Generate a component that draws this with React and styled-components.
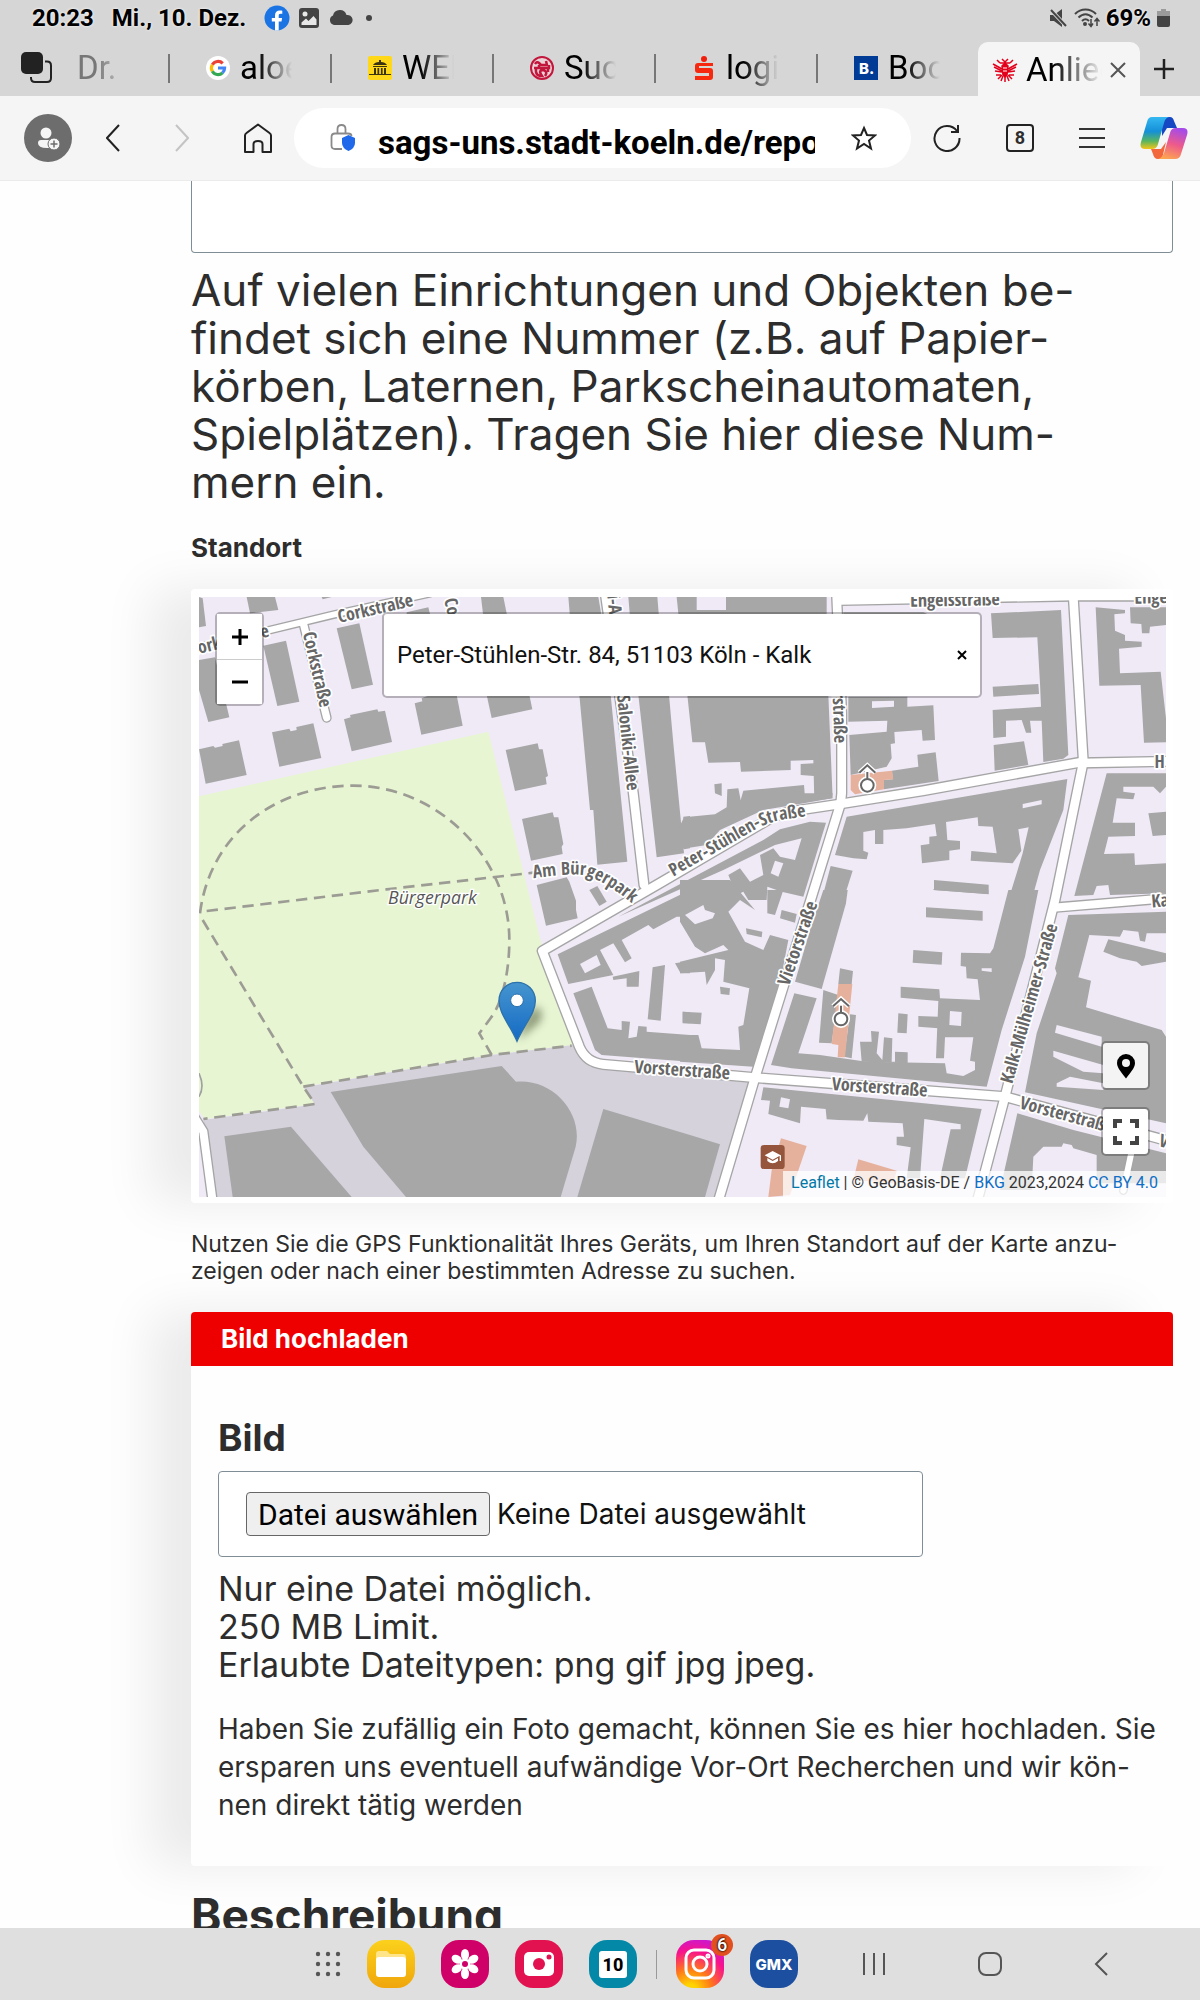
import React, { useRef, useState } from "react";
import styled, { createGlobalStyle } from "styled-components";

const TABS = [
  { key: "google", label: "aloe vera" },
  { key: "web", label: "WEB.DE" },
  { key: "ross", label: "Suche" },
  { key: "spk", label: "login" },
  { key: "booking", label: "Booking" }
];

export default function App() {
  return (
    <Shell>
      <GlobalStyle />
      <StatusBar />
      <TabStrip />
      <Toolbar />
      <Report />
      <Dock />
    </Shell>
  );
}

/* Browser chrome */

function StatusBar() {
  return (
    <Status>
      <StatusText>20:23</StatusText>
      <StatusText>Mi., 10. Dez.</StatusText>
      <StatusIcons>
        <svg width="26" height="26" viewBox="0 0 26 26">
          <circle cx="13" cy="13" r="12.5" fill="#1b74e4" />
          <path d="M11 25.5V16.500H7.800V13H11V10.500C11 7.200 12.900 5.500 15.800 5.500C17 5.500 18.300 5.700 18.300 5.700V8.800H16.700C15.100 8.800 14.700 9.700 14.700 10.700V13H18.100L17.500 16.500H14.700V25.500Z" fill="#fff" />
        </svg>
        <svg width="22" height="22" viewBox="0 0 22 22">
          <rect x="1" y="1" width="20" height="20" rx="3" fill="#444" />
          <circle cx="7" cy="7" r="2.500" fill="#e8e8e8" />
          <path d="M3.500 18V15.500L8 11.500L10.500 14L15.500 9L18.500 12.500V18Z" fill="#e8e8e8" />
        </svg>
        <svg width="26" height="16" viewBox="0 0 26 16">
          <path d="M6 15A5 5 0 0 1 5 5.500A7 7 0 0 1 18.500 5A5 5 0 0 1 20.500 15Z" fill="#444" />
        </svg>
        <svg width="20" height="8" viewBox="0 0 20 8">
          <circle cx="7" cy="4" r="3" fill="#444" />
        </svg>
      </StatusIcons>
      <StatusRight>
        <svg width="20" height="20" viewBox="0 0 20 20">
          <path d="M2 7H6L14 1V19L6 13H2Z" fill="#444" />
          <path d="M2 1L18 18" stroke="#d6d6d6" strokeWidth="4" />
          <path d="M3 2L18 18" stroke="#444" strokeWidth="2" />
        </svg>
        <svg width="26" height="20" viewBox="0 0 26 20" fill="none" stroke="#444" strokeWidth="2">
          <path d="M1 6C7 0 16 0 22 6M4.500 9.500C9 5 14 5 18.500 9.500M8 13C10.500 10.500 12.500 10.500 15 13" />
          <circle cx="11" cy="16" r="1" />
          <path d="M17 11V18M14.500 15.500L17 18.500L19 15.500M23 18V11M20.500 13.500L23 10.500L25.500 13.500" strokeWidth="1.500" />
        </svg>
        <StatusText>69%</StatusText>
        <svg width="13" height="18" viewBox="0 0 13 18">
          <path d="M4 0H9V2H13V8H0V2H4Z" fill="#9b9b9b" />
          <path d="M0 7H13V16Q13 18 11 18H2Q0 18 0 16Z" fill="#444" />
        </svg>
      </StatusRight>
    </Status>
  );
}

function TabStrip() {
  return (
    <Tabs>
      <FirstTab type="button">
        <svg width="32" height="32" viewBox="0 0 32 32">
          <path d="M24 9.500H26Q30 9.500 30 13.500V26Q30 30 26 30H14Q10 30 10 26V25" fill="none" stroke="#222" strokeWidth="2" />
          <rect x="0" y="0" width="22" height="22" rx="5" fill="#222" />
        </svg>
        <TabLabel dim>Dr.</TabLabel>
      </FirstTab>
      {TABS.map(tab => (
        <Tab key={tab.key} type="button">
          <Favicon kind={tab.key} />
          <TabLabel>{tab.label}</TabLabel>
        </Tab>
      ))}
      <ActiveTab>
        <Favicon kind="koeln" />
        <TabLabel>Anliegen</TabLabel>
        <IconButton type="button" aria-label="Tab schließen">
          <svg width="16" height="16" viewBox="0 0 16 16" stroke="#555" strokeWidth="2">
            <path d="M1 1L15 15M15 1L1 15" />
          </svg>
        </IconButton>
      </ActiveTab>
      <NewTab type="button" aria-label="Neuer Tab">
        <svg width="20" height="20" viewBox="0 0 20 20" stroke="#222" strokeWidth="2.500">
          <path d="M10 0V20M0 10H20" />
        </svg>
      </NewTab>
    </Tabs>
  );
}

function Favicon({ kind }) {
  if (kind === "google") {
    return (
      <svg width="24" height="24" viewBox="0 0 24 24" fill="none" strokeWidth="3.200">
        <circle cx="12" cy="12" r="12" fill="#fff" />
        <path d="M6.300 8.700A6.600 6.600 0 0 1 16.700 7.400" stroke="#ea4335" />
        <path d="M6.300 15.300A6.600 6.600 0 0 1 6.300 8.700" stroke="#fbbc05" />
        <path d="M16.500 16.800A6.600 6.600 0 0 1 6.300 15.300" stroke="#34a853" />
        <path d="M12 12H18.600A6.600 6.600 0 0 1 16.500 16.800" stroke="#4285f4" />
      </svg>
    );
  }
  if (kind === "web") {
    return (
      <svg width="24" height="24" viewBox="0 0 24 24">
        <rect width="24" height="24" rx="2" fill="#ffd81a" />
        <path d="M11 4H13V6Q17 6 19 9H5Q7 6 11 6ZM5 10H19V11H5ZM6 12H8V18H6ZM9.500 12H11.200V18H9.500ZM12.900 12H14.600V18H12.900ZM16 12H18V18H16ZM1 18H23V19H1Z" fill="#3b3410" />
      </svg>
    );
  }
  if (kind === "ross") {
    return (
      <svg width="24" height="24" viewBox="0 0 24 24" fill="none" stroke="#c3163c" strokeWidth="2">
        <circle cx="12" cy="12" r="11" fill="#ead3d6" />
        <path d="M5 8Q7 5 9 7L11 9H17L16 5M4 12H19V9M6 13C5 20 10 20 12 20C10 17 9 15 12 14C15 14 18 16 15 20M9 9V12M18 12V16" strokeWidth="2.500" />
      </svg>
    );
  }
  if (kind === "spk") {
    return (
      <svg width="24" height="24" viewBox="0 0 24 24">
        <circle cx="12" cy="3" r="3" fill="#f21d0a" />
        <path d="M6 7H21V10H7V12H18Q21 12 21 15V21Q21 24 18 24H3V20H17V17H6Q3 17 3 14V10Q3 7 6 7Z" fill="#f6280f" />
      </svg>
    );
  }
  if (kind === "booking") {
    return (
      <svg width="24" height="24" viewBox="0 0 24 24">
        <rect width="24" height="24" fill="#003b95" />
        <text x="5" y="18" fontFamily="Inter, sans-serif" fontWeight="800" fontSize="15" fill="#fff">B.</text>
      </svg>
    );
  }
  return (
    <svg width="26" height="26" viewBox="0 0 26 26" fill="none" stroke="#e2001a" strokeWidth="1.500">
      <path d="M10 2L13 5L16 2M8 6H18M5 3L8 6M21 3L18 6M1 7L10 12M25 7L16 12M2 10L10 14M24 10L16 14M3 14L10 15M23 14L16 15M4 18H9M22 18H17M6 22L10 18M20 22L16 18M9 24L11 19M17 24L15 19M13 20V25" />
      <path d="M13 6L16 9L15 18L13 20L11 18L10 9Z" fill="#e2001a" />
      <path d="M11 11H15M11 14H15" stroke="#fff" strokeWidth="1" />
    </svg>
  );
}

function Toolbar() {
  return (
    <Bar>
      <IconButton type="button" aria-label="Profil">
        <svg width="48" height="48" viewBox="0 0 48 48">
          <circle cx="24" cy="24" r="24" fill="#6d6d6d" />
          <circle cx="22" cy="19" r="5.500" fill="#f5f5f5" />
          <path d="M14 29Q14 26 17 26H28V34H23Q14 34 14 29Z" fill="#f5f5f5" />
          <circle cx="30" cy="30" r="6" fill="#f5f5f5" stroke="#6d6d6d" />
          <path d="M30 26.500V33.500M26.500 30H33.500" stroke="#6d6d6d" strokeWidth="1.500" />
        </svg>
      </IconButton>
      <NavGroup>
        <IconButton type="button" aria-label="Zurück">
          <svg width="14" height="28" viewBox="0 0 14 28" fill="none" stroke="#222" strokeWidth="2">
            <path d="M13 1L1 14L13 27" />
          </svg>
        </IconButton>
        <IconButton type="button" aria-label="Vorwärts">
          <svg width="14" height="28" viewBox="0 0 14 28" fill="none" stroke="#c4c4c4" strokeWidth="2">
            <path d="M1 1L13 14L1 27" />
          </svg>
        </IconButton>
        <IconButton type="button" aria-label="Startseite">
          <svg width="28" height="30" viewBox="0 0 28 30" fill="none" stroke="#222" strokeWidth="2" strokeLinejoin="round">
            <path d="M1 12.500Q1 11 2.500 10L14 1.500L25.500 10Q27 11 27 12.500V29H18.500V21Q18.500 18 14 18Q9.500 18 9.500 21V29H1Z" />
          </svg>
        </IconButton>
      </NavGroup>
      <AddressPill>
        <svg width="26" height="28" viewBox="0 0 26 28" fill="none">
          <path d="M12 25H5Q1.500 25 1.500 21.500V13Q1.500 9.500 5 9.500H18Q21.500 9.500 21.500 12M7.500 9V5Q7.500 1 11.500 1Q15.500 1 15.500 5V9" stroke="#8a8a8a" strokeWidth="1.800" />
          <path d="M18.500 11L25 14V19Q25 24 18.500 27Q12 24 12 19V14Z" fill="#2169eb" />
        </svg>
        <Address aria-label="Adresse" defaultValue="sags-uns.stadt-koeln.de/report" />
        <IconButton type="button" aria-label="Favorit">
          <svg width="26" height="26" viewBox="0 0 26 26" fill="none" stroke="#222" strokeWidth="2" strokeLinejoin="miter">
            <path d="M13 3L16 10L24 10.500L18 15.600L20 23.500L13 19L6 23.500L8 15.600L2 10.500L10 10Z" />
          </svg>
        </IconButton>
      </AddressPill>
      <ToolGroup>
        <IconButton type="button" aria-label="Neu laden">
          <svg width="28" height="28" viewBox="0 0 28 28" fill="none" stroke="#222" strokeWidth="2">
            <path d="M24 7A12.500 12.500 0 1 0 26.500 14M25 1V8H18" />
          </svg>
        </IconButton>
        <TabCount type="button" aria-label="Offene Tabs">8</TabCount>
        <IconButton type="button" aria-label="Menü">
          <svg width="26" height="20" viewBox="0 0 26 20" stroke="#333" strokeWidth="2">
            <path d="M0 1H26M0 10H26M0 19H26" />
          </svg>
        </IconButton>
        <IconButton type="button" aria-label="Copilot">
          <svg width="48" height="44" viewBox="0 0 48 44">
            <defs>
              <linearGradient id="cpA" x1="0" y1="0" x2="0" y2="1">
                <stop offset="0" stopColor="#35b8f1" />
                <stop offset=".45" stopColor="#1590d8" />
                <stop offset=".75" stopColor="#57b560" />
                <stop offset="1" stopColor="#f5c518" />
              </linearGradient>
              <linearGradient id="cpB" x1=".6" y1="0" x2=".3" y2="1">
                <stop offset="0" stopColor="#a64be8" />
                <stop offset=".5" stopColor="#ed5a8b" />
                <stop offset="1" stopColor="#fda650" />
              </linearGradient>
            </defs>
            <path d="M22 1H30Q33 1 34 5L37 12H27L22 20Z" fill="#1748c4" />
            <path d="M11 33H21L26 26L22 43H18Q14 43 13 38Z" fill="#f2683c" />
            <path d="M12 1H29Q25 2 24 7L18 28Q17 33 12 33H5Q-1 33 1 26L7 6Q8 1 12 1Z" fill="url(#cpA)" />
            <path d="M36 12H43Q49 12 47 19L41 38Q40 43 35 43H18Q22 42 24 37L30 17Q31 12 36 12Z" fill="url(#cpB)" />
          </svg>
        </IconButton>
      </ToolGroup>
    </Bar>
  );
}

/* Report page */

function Report() {
  const fileRef = useRef(null);
  const [fileName, setFileName] = useState("");

  return (
    <Page>
      <NumberField aria-label="Nummer" />
      <Help>
        Auf vielen Einrichtungen und Objekten be-<br />
        findet sich eine Nummer (z.B. auf Papier-<br />
        körben, Laternen, Parkscheinautomaten,<br />
        Spielplätzen). Tragen Sie hier diese Num-<br />
        mern ein.
      </Help>
      <FieldTitle>Standort</FieldTitle>
      <LocationMap />
      <MapHint>
        Nutzen Sie die GPS Funktionalität Ihres Geräts, um Ihren Standort auf der Karte anzu-<br />
        zeigen oder nach einer bestimmten Adresse zu suchen.
      </MapHint>
      <Panel>
        <PanelHead>Bild hochladen</PanelHead>
        <PanelBody>
          <FileLabel htmlFor="bild">Bild</FileLabel>
          <FileBox>
            <FileButton type="button" onClick={() => fileRef.current.click()}>Datei auswählen</FileButton>
            <span>{fileName || "Keine Datei ausgewählt"}</span>
            <input
              id="bild"
              ref={fileRef}
              type="file"
              hidden
              accept=".png,.gif,.jpg,.jpeg"
              onChange={e => setFileName(e.target.files[0]?.name || "")}
            />
          </FileBox>
          <Limits>
            Nur eine Datei möglich.<br />
            250 MB Limit.<br />
            Erlaubte Dateitypen: png gif jpg jpeg.
          </Limits>
          <PanelText>
            Haben Sie zufällig ein Foto gemacht, können Sie es hier hochladen. Sie<br />
            ersparen uns eventuell aufwändige Vor-Ort Recherchen und wir kön-<br />
            nen direkt tätig werden
          </PanelText>
        </PanelBody>
      </Panel>
      <NextTitle>Beschreibung</NextTitle>
    </Page>
  );
}

function LocationMap() {
  return (
    <MapCard>
      <MapView>
        <MapDrawing />
        <ZoomControl>
          <ZoomButton type="button" aria-label="Vergrößern">
            <svg width="16" height="16" viewBox="0 0 16 16" stroke="#000" strokeWidth="3"><path d="M8 0V16M0 8H16" /></svg>
          </ZoomButton>
          <ZoomButton type="button" aria-label="Verkleinern">
            <svg width="16" height="16" viewBox="0 0 16 16" stroke="#000" strokeWidth="3"><path d="M0 8H16" /></svg>
          </ZoomButton>
        </ZoomControl>
        <SearchBox>
          <SearchInput aria-label="Adresse suchen" defaultValue="Peter-Stühlen-Str. 84, 51103 Köln - Kalk" />
          <IconButton type="button" aria-label="Suche leeren">
            <svg width="10" height="10" viewBox="0 0 10 10" stroke="#000" strokeWidth="2"><path d="M1 1L9 9M9 1L1 9" /></svg>
          </IconButton>
        </SearchBox>
        <SideControls>
          <MapButton type="button" aria-label="Mein Standort" muted>
            <svg width="20" height="26" viewBox="0 0 20 26">
              <path d="M10 1A9 9 0 0 1 19 10C19 15 14 20 10 25.500C6 20 1 15 1 10A9 9 0 0 1 10 1ZM10 6A4 4 0 1 0 10 14A4 4 0 1 0 10 6Z" fill="#000" />
            </svg>
          </MapButton>
          <MapButton type="button" aria-label="Vollbild">
            <svg width="26" height="26" viewBox="0 0 26 26" fill="none" stroke="#444" strokeWidth="4">
              <path d="M2 9V2H9M17 2H24V9M24 17V24H17M9 24H2V17" />
            </svg>
          </MapButton>
        </SideControls>
        <Attribution>
          <a href="#leaflet">Leaflet</a> | © GeoBasis-DE / <a href="#bkg">BKG</a> 2023,2024 <a href="#cc">CC BY 4.0</a>
        </Attribution>
      </MapView>
    </MapCard>
  );
}

// building footprints, one list per map tile; origin of the tile in brackets
const TILE_NW = [
  "27,51 38,55 48,138 27,142", "170,51 255,51 265,90 180,100", "395,51 425,51 398,58",
  "27,240 75,232 118,412 55,426 27,330", "220,197 288,182 328,365 262,378", "440,145 508,130 549,314 485,328",
  "27,508 70,498 75,503 98,498 97,492 147,481 170,585 47,611",
  "246,457 298,446 302,454 320,450 319,441 370,430 394,534 268,560",
  "462,418 482,412 480,405 562,388 565,395 585,392 606,486 485,514",
  "674,370 697,364 695,355 720,345 800,345 818,437 694,464", "890,345 1018,345 1027,388 905,414",
  "650,97 715,82 722,110 650,110", "873,51 940,51 952,110 880,110", "1135,51 1225,51 1235,110 1140,110",
  "947,510 1043,490 1047,508 1058,508 1074,588 1067,592 1070,613 975,633",
  "996,717 1088,697 1092,712 1105,712 1120,792 1115,800 1118,822 1023,842",
  "1040,915 1130,892 1138,905 1158,962 1158,990 1163,1015 1068,1037", "1198,930 1222,918 1250,965 1228,978",
  "1168,345 1262,345 1312,845 1222,854 1210,690 1200,690", "1345,345 1437,345 1450,490 1482,820 1400,832",
  "1315,51 1402,51 1407,110 1320,110", "1480,710 1500,708 1500,805 1482,808", "1460,51 1520,51 1520,110 1466,110"
];
// [1470, 0]
const TILE_NE = [
  "48,51 48,90 138,90 138,51 440,51 440,110 0,110 0,51",
  "22,345 445,345 458,655 403,662 400,540 332,542 332,570 183,575 180,546 85,548 75,487 37,487",
  "362,552 402,550 402,588 362,585", "103,613 125,610 125,648 105,640",
  "12,712 105,703 140,682 142,628 175,625 182,660 190,632 372,615 374,640 458,640 455,655 380,668 250,690 120,750 80,795 0,808 -25,790",
  "505,350 682,350 682,380 760,376 765,480 728,482 725,450 643,456 645,490 632,492 635,535 620,560 512,585 508,465 620,455 622,422 505,425",
  "490,97 730,97 760,110 490,110",
  "712,524 767,517 776,603 612,628 612,600 638,598 636,572 715,560",
  "933,100 1143,90 1165,525 1150,536 1090,546 1085,422 1050,422 1054,458 1038,458 1025,420 978,422 978,470 940,474 938,390 1083,380 1080,310 1072,172 938,174",
  "938,320 1075,312 1077,342 940,350", "941,495 1032,484 1045,555 944,572",
  "1247,82 1335,90 1335,100 1303,103 1305,152 1335,165 1335,182 1385,185 1385,200 1317,206 1320,280 1442,275 1458,415 1458,487 1392,488 1382,315 1258,317",
  "1350,82 1458,82 1458,135 1410,140 1408,160 1386,160 1384,132 1352,130",
  "500,710 1162,597 1150,690 1080,870 1055,960 985,960 1010,880 1028,820 1046,742 1015,748 1024,812 998,850 872,842 874,813 950,820 938,740 895,738 893,712 798,726 802,780 840,783 840,808 808,812 808,840 726,850 722,796 748,792 748,770 770,768 765,732 680,745 610,750 610,792 585,792 585,750 550,756 550,812 565,818 560,838 520,835 465,825",
  "452,858 518,872 490,960 425,960", "762,900 926,914 926,943 762,930",
  "1280,580 1458,580 1458,620 1440,640 1420,620 1330,620 1330,635 1365,640 1360,658 1310,655 1298,728 1365,728 1365,768 1285,770 1272,822 1363,820 1365,855 1458,850 1458,940 1290,945 1285,915 1250,918 1240,945 1183,948",
  "1405,700 1458,695 1458,765 1418,768",
  "-185,1010 250,780 300,748 390,725 438,728 370,950 305,935 262,920 260,960 205,960 190,935 158,950 155,910 145,885 180,865 210,905 250,885 240,825 280,805 300,830 345,840 365,775 285,795 130,870"
];
// [0, 930]
const TILE_SW = [
  "103,739 303,710 485,921 128,921", "1240,657 1500,735 1590,763 1545,921 1162,921",
  "1103,193 1500,0 1500,80 1460,80 1390,118 1375,105 1295,150 1325,205 1305,217 1270,160 1230,180 1270,255 1135,282",
  "1150,310 1205,290 1253,415 1295,420 1295,393 1320,395 1315,445 1340,440 1345,408 1370,410 1370,425 1500,435 1500,515 1235,495 1215,480",
  "1268,260 1348,243 1346,290 1310,290 1310,265 1270,270", "1388,232 1425,225 1412,392 1373,388",
  "1478,365 1500,367 1500,400 1478,398", "1455,220 1500,212 1500,250 1472,250"
];
// [1470, 930]
const TILE_SE = [
  "0,-30 150,-30 225,60 180,30 145,65 195,155 250,180 270,135 325,150 300,280 220,530 0,515 0,435 55,435 65,475 180,480 175,410 190,405 208,295 130,275 135,210 105,205 105,240 80,285 75,245 0,250 0,215 145,180 130,165 75,190 45,170 0,95",
  "262,0 310,0 285,75 262,70", "8,365 65,368 62,403 8,400", "120,290 150,295 148,315 122,312",
  "198,115 247,125 245,142 200,132", "305,60 350,72 345,98 300,85",
  "430,0 503,0 498,40 425,297 345,275 390,120",
  "343,310 410,325 355,490 420,495 560,515 795,520 800,550 850,558 885,540 885,515 870,512 880,442 795,442 792,505 768,505 775,333 662,323 662,290 778,298 780,325 900,330 893,268 860,265 858,230 842,228 843,188 930,190 940,175 985,0 1075,0 1035,200 965,420 920,590 335,535 273,525",
  "738,52 908,63 908,92 738,82", "700,180 787,187 785,224 698,218", "760,-2 925,0 925,12 760,0",
  "655,370 683,373 680,430 652,428", "715,378 775,380 775,415 715,410",
  "540,455 575,455 573,423 597,425 590,490 607,510 612,442 637,445 635,515 645,515 645,485 683,487 683,520 545,515",
  "480,235 519,243 515,282 475,282", "430,300 475,315 455,460 417,458", "510,373 528,375 515,505 492,500",
  "250,592 905,657 855,865 780,865 812,718 842,718 842,703 733,687 720,865 680,865 692,772 650,765 650,740 672,740 668,700 565,695 562,670 550,692 475,690 440,688 437,657 363,650 360,700 265,672 270,632 243,630",
  "1165,75 1458,65 1458,130 1400,130 1395,155 1380,152 1375,125 1330,120 1320,140 1228,135 1195,262 1233,272 1218,352 1445,420 1458,440 1458,700 1035,607 1070,430 1130,250 1125,235",
  "1285,148 1458,190 1458,215 1385,228 1370,215 1320,205 1270,185",
  "1012,670 1180,720 1458,790 1458,880 1250,880 1250,795 1180,775 1175,765 1150,760 1145,770 1090,770 1060,800 1055,900 960,900"
];
const YARDS_SE = [
  "15,75 70,45 75,60 105,70 98,85 45,103", "810,363 845,366 843,408 808,405", "905,235 935,235 935,246 905,242",
  "303,622 330,628 325,655 298,650", "1130,405 1265,440 1265,470 1125,428", "1120,482 1270,525 1270,550 1210,545 1120,500",
  "1130,580 1170,560 1270,580 1270,600 1130,590"
];

const ROADS = [
  { d: "M0 208L240 150L430 104L720 40", w: 26 },
  { d: "M340 130L410 413", w: 30 },
  { d: "M1240 0L1330 640L1362 915", w: 34 },
  { d: "M1938 0L1955 400L1955 640L1952 670L1862 960L1780 1220L1695 1493L1580 1880", w: 34 },
  { d: "M1950 62L2650 49L2940 49", w: 32 },
  { d: "M2648 20L2680 545L2595 960L2445 1550L2360 1870", w: 34 },
  { d: "M2590 983L2940 954", w: 32 },
  { d: "M2830 1690L2800 1832", w: 26 },
  { d: "M0 1590L40 1655L70 1880", w: 32 },
  { d: "M2680 545L2200 632L1950 672L1830 690Q1760 700 1720 728L1400 915L1057 1113L1168 1400Q1188 1448 1240 1453L1695 1493L2445 1550L2640 1603L2960 1690", w: 34 },
  { d: "M2670 549L2940 544", w: 34 }
];

const LABELS = [
  { x: 560, y: 103, r: -13, t: "Corkstraße" },
  { x: 364, y: 272, r: 77, t: "Corkstraße" },
  { x: 50, y: 216, r: -14, t: "Cork" },
  { x: 228, y: 172, r: -14, t: "e" },
  { x: 768, y: 84, r: 77, t: "Co" },
  { x: 1255, y: 75, r: 84, t: "i-A" },
  { x: 1296, y: 490, r: 84, t: "Saloniki-Allee" },
  { x: 1930, y: 400, r: 88, t: "orstraße" },
  { x: 2295, y: 78, r: -1, t: "Engelsstraße" },
  { x: 2900, y: 70, r: -1, t: "Engels" },
  { x: 2909, y: 563, r: 0, t: "H" },
  { x: 2912, y: 980, r: -5, t: "Ka" },
  { x: 1840, y: 1095, r: -71, t: "Vietorstraße" },
  { x: 2535, y: 1275, r: -74, t: "Kalk-Mülheimer-Straße" },
  { x: 1475, y: 1488, r: 4, t: "Vorsterstraße" },
  { x: 2068, y: 1540, r: 4, t: "Vorsterstraße" },
  { x: 2625, y: 1622, r: 15, t: "Vorsterstraße" },
  { x: 2930, y: 1705, r: 15, t: "Vo" }
];

function Footprints({ list, fill = "#a7a7a7" }) {
  return list.map((points, i) => <polygon key={i} points={points} fill={fill} />);
}

function MapDrawing() {
  return (
    <MapSvg viewBox="27 51 2901 1800" preserveAspectRatio="xMidYMid slice" aria-hidden>
      <defs>
        <linearGradient id="pin" x1="0" y1="0" x2="0" y2="1">
          <stop offset="0" stopColor="#4695cf" />
          <stop offset="1" stopColor="#146ac4" />
        </linearGradient>
        <filter id="soft" x="-50%" y="-50%" width="200%" height="200%"><feGaussianBlur stdDeviation="12" /></filter>
        <path id="stuehlen" d="M1450 890L1690 752Q1740 722 1800 716L1900 700" />
        <path id="buerger" d="M1030 895Q1130 880 1180 885Q1240 900 1320 965" />
      </defs>
      <rect x="0" y="0" width="3000" height="1900" fill="#f0eaf7" />
      <path d="M0 655L895 455L1050 1075L1150 1395L905 1425L340 1520L375 1572L45 1617L0 1560Z" fill="#e7f5d3" />
      <path d="M40 1620L375 1573L340 1522L905 1425L1150 1395L1200 1460L1690 1500L1580 1880L75 1880Z" fill="#d5d2dc" />
      <Footprints list={TILE_NW} />
      <g transform="translate(1470 0)">
        <Footprints list={TILE_NE} />
        <Footprints fill="#f0eaf7" list={["576,364 642,362 642,380 576,384", "1028,672 1085,660 1085,673 1028,685", "285,842 310,850 295,890 272,880"]} />
        <polygon points="512,585 636,572 640,598 612,600 612,628 525,643 512,630" fill="#e6b19c" />
      </g>
      <g transform="translate(0 930)">
        <Footprints list={TILE_SW} />
        <path d="M422 606L935 528L978 575C1090 565 1180 670 1157 770L1112 921H648L520 770Z" fill="#a7a7a7" />
        <polygon points="1170,222 1220,195 1232,225 1185,250" fill="#f0eaf7" />
      </g>
      <g transform="translate(1470 930)">
        <Footprints list={TILE_SE} />
        <Footprints list={YARDS_SE} fill="#f0eaf7" />
        <Footprints fill="#e6b19c" list={["475,282 517,282 495,502 473,502 475,465 455,462", "303,745 380,768 330,915 265,921 275,840", "535,808 650,842 640,880 520,870"]} />
      </g>

      <g fill="none" stroke="#9c9c94" strokeWidth="8" strokeDasharray="34 20">
        <path d="M30 1000C60 760 260 617 490 617C740 617 958 830 958 1080C958 1180 935 1270 905 1310L868 1360L905 1425" />
        <path d="M50 993L590 928L1030 878" />
        <path d="M38 1020L340 1520L375 1572L40 1617" />
        <path d="M340 1520L905 1425L1145 1397" />
      </g>
      <path d="M27 1480Q45 1520 27 1550" fill="none" stroke="#a0a0a0" strokeWidth="5" />

      <g fill="none" strokeLinecap="round" strokeLinejoin="round">
        {ROADS.map(r => <path key={r.d} d={r.d} stroke="#a5a5a5" strokeWidth={r.w} />)}
        {ROADS.map(r => <path key={r.d} d={r.d} stroke="#fff" strokeWidth={r.w - 8} />)}
      </g>

      <StreetLabels>
        {LABELS.map(l => (
          <text key={l.t + l.x} transform={`translate(${l.x} ${l.y}) rotate(${l.r})`} textAnchor="middle">{l.t}</text>
        ))}
        <text><textPath href="#stuehlen">Peter-Stühlen-Straße</textPath></text>
        <text><textPath href="#buerger">Am Bürgerpark</textPath></text>
      </StreetLabels>
      <ParkLabel x="727" y="972" textAnchor="middle">Bürgerpark</ParkLabel>

      {/* places of worship */}
      {[[2032, 616], [1953, 1317]].map(([x, y]) => (
        <g key={x} transform={`translate(${x} ${y})`} fill="none">
          <path d="M-24 -38L0 -60L24 -38M0 -55V-20" stroke="#fff" strokeWidth="14" />
          <circle r="20" fill="#fff" stroke="#fff" strokeWidth="14" />
          <path d="M-24 -38L0 -60L24 -38M0 -40V-20" stroke="#666" strokeWidth="6" />
          <circle r="19" fill="#fff" stroke="#666" strokeWidth="6" />
        </g>
      ))}
      <g transform="translate(1712 1695)">
        <rect width="72" height="72" rx="10" fill="#94553c" />
        <path d="M12 31L36 18L60 31L36 44ZM20 39V48Q36 62 52 48V39L36 48ZM57 31H61V48H57Z" fill="#fff" />
      </g>

      <path d="M985 1380Q1000 1310 1035 1280Q1065 1285 1050 1325Z" fill="#44502f" opacity=".55" filter="url(#soft)" />
      <path d="M981 1207C1013 1207 1036 1232 1036 1262C1036 1300 1005 1330 981 1384C957 1330 927 1300 927 1262C927 1232 950 1207 981 1207Z" fill="url(#pin)" stroke="#2d72ab" strokeWidth="4" />
      <circle cx="981" cy="1261" r="19" fill="#fff" stroke="#2a6fa8" strokeWidth="3" />
    </MapSvg>
  );
}

/* Task bar of the tablet */

function Dock() {
  return (
    <DockBar>
      <DockApps>
        <DockButton type="button" aria-label="Alle Apps">
          <svg width="26" height="28" viewBox="0 0 26 28" fill="#555">
            {[3, 13, 23].map(x => [4, 14, 24].map(y => <circle key={`${x}-${y}`} cx={x} cy={y} r="2.200" />))}
          </svg>
        </DockButton>
        <DockApp type="button" aria-label="Eigene Dateien" bg="linear-gradient(#fbd11c, #f0a60b)">
          <svg width="32" height="28" viewBox="0 0 32 28">
            <path d="M1 4Q1 1 4 1H12L15 4H28Q31 4 31 8V14H1Z" fill="#ffe48a" />
            <rect x="1" y="7" width="30" height="20" rx="3" fill="#fff" />
          </svg>
        </DockApp>
        <DockApp type="button" aria-label="Galerie" bg="#cf0068">
          <svg width="32" height="32" viewBox="-16 -16 32 32">
            {[0, 60, 120, 180, 240, 300].map(a => (
              <ellipse key={a} cx="0" cy="-9.500" rx="4" ry="5.500" fill="#fff" transform={`rotate(${a})`} />
            ))}
            <circle r="5.500" fill="#fff" />
            <circle r="3" fill="#cf0068" />
          </svg>
        </DockApp>
        <DockApp type="button" aria-label="Kamera" bg="#e1124f">
          <svg width="30" height="24" viewBox="0 0 30 24">
            <rect width="30" height="24" rx="5" fill="#fff" />
            <circle cx="15" cy="12" r="6" fill="#e1124f" />
            <circle cx="25" cy="5" r="2.500" fill="#e1124f" />
          </svg>
        </DockApp>
        <DockApp type="button" aria-label="Kalender" bg="#0488a8">
          <CalendarPage>10</CalendarPage>
        </DockApp>
        <Divider />
        <DockApp type="button" aria-label="Instagram" bg="radial-gradient(circle at 30% 105%, #ffd400 10%, #ff7a18 35%, #f8128c 65%, #b01cf5 100%)">
          <svg width="32" height="32" viewBox="0 0 32 32" fill="none" stroke="#fff" strokeWidth="3">
            <rect x="2" y="2" width="28" height="28" rx="8" />
            <circle cx="16" cy="16" r="7" />
            <circle cx="24" cy="8" r="1" />
          </svg>
          <Badge>6</Badge>
        </DockApp>
        <DockApp type="button" aria-label="Mail" bg="#1c4f9f">GMX</DockApp>
      </DockApps>
      <SystemNav>
        <DockButton type="button" aria-label="Letzte Apps">
          <svg width="24" height="24" viewBox="0 0 24 24" stroke="#555" strokeWidth="2"><path d="M2 1V23M12 1V23M22 1V23" /></svg>
        </DockButton>
        <DockButton type="button" aria-label="Home">
          <svg width="24" height="24" viewBox="0 0 24 24" fill="none" stroke="#555" strokeWidth="2"><rect x="1" y="1" width="22" height="22" rx="7" /></svg>
        </DockButton>
        <DockButton type="button" aria-label="Zurück">
          <svg width="14" height="24" viewBox="0 0 14 24" fill="none" stroke="#555" strokeWidth="2"><path d="M13 1L2 12L13 23" /></svg>
        </DockButton>
      </SystemNav>
    </DockBar>
  );
}

/* Styled components */

const GlobalStyle = createGlobalStyle`
  * { box-sizing: border-box; }
  body { margin: 0; background: #fefefe; color: #2d2d2d; font-family: Inter, "Liberation Sans", sans-serif; }
  button, input { font: inherit; color: inherit; }
  button { padding: 0; border: 0; background: none; cursor: pointer; }
  svg { display: block; flex: none; }
`;

const Shell = styled.div`
  display: flex;
  flex-direction: column;
  height: 100vh;
  overflow: hidden;
`;

const Status = styled.header`
  display: flex;
  align-items: center;
  gap: 18px;
  height: 36px;
  padding: 0 30px 0 32px;
  background: #d6d6d6;
  font-family: Roboto, sans-serif;
`;

const StatusText = styled.span`
  font-size: 24px;
  font-weight: 700;
  color: #000;
  text-shadow: 0 0 3px #fff;
`;

const StatusIcons = styled.div`
  display: flex;
  align-items: center;
  gap: 8px;
`;

const StatusRight = styled.div`
  display: flex;
  align-items: center;
  gap: 6px;
  margin-left: auto;
`;

const Tabs = styled.nav`
  display: flex;
  align-items: stretch;
  height: 60px;
  padding-top: 6px;
  background: #d6d6d6;
  font-family: Roboto, sans-serif;
`;

const Tab = styled.button`
  position: relative;
  display: flex;
  align-items: center;
  gap: 10px;
  width: 162px;
  padding: 0 38px 2px 38px;

  &::before {
    content: "";
    position: absolute;
    left: 0;
    top: 12px;
    width: 2px;
    height: 29px;
    background: #777;
  }
`;

const FirstTab = styled(Tab)`
  width: 168px;
  gap: 24px;
  padding-left: 21px;

  &::before { display: none; }
`;

const ActiveTab = styled.div`
  display: flex;
  align-items: center;
  gap: 8px;
  width: 162px;
  padding: 2px 14px 0;
  border-radius: 10px 10px 0 0;
  background: #f5f5f5;
`;

const TabLabel = styled.span`
  flex: 1;
  min-width: 0;
  overflow: hidden;
  white-space: nowrap;
  text-align: left;
  font-size: 33px;
  line-height: 44px;
  color: ${({ dim }) => (dim ? "#777" : "#000")};
  mask-image: linear-gradient(90deg, #000 35%, transparent);
`;

const IconButton = styled.button`
  display: flex;
  align-items: center;
  justify-content: center;
`;

const NewTab = styled(IconButton)`
  padding: 0 14px;
`;

const Bar = styled.div`
  display: flex;
  align-items: center;
  gap: 22px;
  height: 85px;
  padding: 0 12px 0 24px;
  border-bottom: 1px solid #ebebeb;
  background: #f5f5f5;
`;

const NavGroup = styled.div`
  display: flex;
  flex: none;
  align-items: center;
  justify-content: space-between;
  width: 178px;
  padding-left: 12px;
`;

const AddressPill = styled.div`
  display: flex;
  flex: 1;
  align-items: center;
  height: 60px;
  padding: 0 34px 0 36px;
  border-radius: 30px;
  background: #fff;
`;

const Address = styled.input`
  flex: 1;
  min-width: 0;
  margin: 8px 36px 0 22px;
  padding: 0;
  border: 0;
  outline: 0;
  background: none;
  font-family: Roboto, sans-serif;
  font-size: 33px;
  font-weight: 700;
  color: #000;
`;

const ToolGroup = styled.div`
  display: flex;
  flex: none;
  align-items: center;
  gap: 45px;

  & > :last-child { margin-left: -10px; }
`;

const TabCount = styled.button`
  width: 28px;
  height: 28px;
  border: 2px solid #222;
  border-radius: 4px;
  font-family: Roboto, sans-serif;
  font-size: 18px;
  font-weight: 700;
  line-height: 24px;
`;

const Page = styled.main`
  flex: 1;
  min-height: 0;
  overflow: hidden;
  padding: 0 27px 0 191px;
`;

const NumberField = styled.input`
  display: block;
  width: 100%;
  height: 72px;
  border: 1px solid #7f8e96;
  border-top: 0;
  border-radius: 0 0 4px 4px;
  background: #fff;
`;

const Help = styled.p`
  margin: 13px 0 0;
  font-size: 44px;
  line-height: 48px;
  white-space: nowrap;
`;

const FieldTitle = styled.h3`
  margin: 26px 0 25px;
  font-size: 26px;
  line-height: 32px;
  font-weight: 700;
`;

const MapCard = styled.section`
  padding: 8px 7px 6px 8px;
  border-radius: 4px;
  background: #fff;
  box-shadow: -40px 0 50px rgba(0, 0, 0, 0.08);
`;

const MapView = styled.div`
  position: relative;
  height: 600px;
  overflow: hidden;
  font-family: Roboto, sans-serif;
`;

const MapSvg = styled.svg`
  width: 100%;
  height: 100%;
`;

const StreetLabels = styled.g`
  font-family: "Open Sans Condensed", "Liberation Sans Narrow", Roboto, sans-serif;
  font-size: 54px;
  font-weight: 300;
  fill: #666;
  stroke: #fff;
  stroke-width: 10px;
  stroke-linejoin: round;
  paint-order: stroke;
`;

const ParkLabel = styled.text`
  font-family: "Open Sans", "Noto Sans", sans-serif;
  font-size: 53px;
  font-style: italic;
  font-weight: 500;
  fill: #555;
  stroke: #fff;
  stroke-width: 8px;
  paint-order: stroke;
`;

const ZoomControl = styled.div`
  position: absolute;
  top: 15px;
  left: 16px;
  border: 2px solid rgba(0, 0, 0, 0.25);
  border-radius: 5px;
  background-clip: padding-box;
`;

const ZoomButton = styled.button`
  display: flex;
  align-items: center;
  justify-content: center;
  width: 45px;
  height: 45px;
  background: #fff;

  & + & { border-top: 1px solid #ccc; }
`;

const SearchBox = styled.div`
  position: absolute;
  top: 15px;
  left: 183px;
  right: 184px;
  display: flex;
  align-items: center;
  height: 86px;
  padding: 0 13px;
  border: 2px solid rgba(0, 0, 0, 0.25);
  border-radius: 5px;
  background: #fff;
  background-clip: padding-box;
`;

const SearchInput = styled.input`
  flex: 1;
  min-width: 0;
  padding: 0;
  border: 0;
  outline: 0;
  font-size: 24px;
  color: #111;
`;

const SideControls = styled.div`
  position: absolute;
  right: 16px;
  bottom: 41px;
  display: flex;
  flex-direction: column;
  gap: 17px;
`;

const MapButton = styled.button`
  display: flex;
  align-items: center;
  justify-content: center;
  width: 49px;
  height: 49px;
  border: 2px solid rgba(0, 0, 0, 0.25);
  border-radius: 5px;
  background: ${({ muted }) => (muted ? "#f4f4f4" : "#fff")};
  background-clip: padding-box;
`;

const Attribution = styled.div`
  position: absolute;
  right: 0;
  bottom: 0;
  padding: 0 8px 2px;
  background: rgba(255, 255, 255, 0.75);
  font-size: 16px;
  line-height: 24px;
  color: #333;

  a { color: #0078a8; text-decoration: none; }
  a + a { color: #0f6fc6; }
`;

const MapHint = styled.p`
  margin: 28px 0 27px;
  font-size: 23px;
  line-height: 27px;
  white-space: nowrap;
`;

const Panel = styled.section`
  border-radius: 4px;
  background: #fefefe;
  box-shadow: -40px 0 50px rgba(0, 0, 0, 0.08);
`;

const PanelHead = styled.h3`
  margin: 0;
  padding: 0 30px;
  border-radius: 4px 4px 0 0;
  background: #ef0000;
  font-size: 26px;
  line-height: 54px;
  font-weight: 700;
  color: #fff;
`;

const PanelBody = styled.div`
  padding: 48px 27px 42px;
`;

const FileLabel = styled.label`
  display: block;
  margin-bottom: 9px;
  font-size: 37px;
  line-height: 48px;
  font-weight: 700;
`;

const FileBox = styled.div`
  display: flex;
  align-items: center;
  gap: 7px;
  width: 76%;
  height: 86px;
  padding: 0 27px;
  border: 1px solid #7f8e96;
  border-radius: 4px;
  background: #fff;
  font-size: 28px;
  color: #111;
  white-space: nowrap;
`;

const FileButton = styled.button`
  height: 44px;
  padding: 0 11px;
  border: 1px solid #666;
  border-radius: 4px;
  background: #efefef;
  font-family: Roboto, sans-serif;
  font-size: 30px;
  color: #000;
`;

const Limits = styled.p`
  margin: 13px 0 26px;
  font-size: 34px;
  line-height: 38px;
  white-space: nowrap;
`;

const PanelText = styled.p`
  margin: 0;
  font-size: 28px;
  line-height: 38px;
  white-space: nowrap;
`;

const NextTitle = styled.h2`
  margin: 24px 0 0;
  font-size: 46px;
  line-height: 50px;
  font-weight: 700;
`;

const DockBar = styled.footer`
  position: relative;
  display: flex;
  align-items: center;
  justify-content: space-between;
  height: 72px;
  padding: 0 92px 0 315px;
  background: #dfdfdf;
`;

const DockApps = styled.div`
  display: flex;
  align-items: center;
  gap: 26px;
`;

const DockButton = styled.button`
  display: flex;
  align-items: center;
  justify-content: center;
`;

const DockApp = styled.button`
  position: relative;
  display: flex;
  align-items: center;
  justify-content: center;
  width: 48px;
  height: 48px;
  border-radius: 18px;
  background: ${({ bg }) => bg};
  font-size: 15px;
  font-weight: 800;
  color: #fff;
`;

const CalendarPage = styled.span`
  width: 28px;
  height: 27px;
  border-radius: 3px;
  background: #fff;
  font-family: Roboto, sans-serif;
  font-size: 18px;
  line-height: 28px;
  color: #000;
`;

const Badge = styled.span`
  position: absolute;
  top: -6px;
  right: -9px;
  width: 22px;
  height: 22px;
  border-radius: 50%;
  background: #e2501f;
  font-family: Roboto, sans-serif;
  font-size: 18px;
  line-height: 22px;
  font-weight: 500;
  color: #fff;
  text-shadow: 0 0 2px #000, 0 0 2px #000;
`;

const Divider = styled.span`
  width: 1px;
  height: 29px;
  margin: 0 -7px;
  background: #999;
`;

const SystemNav = styled.div`
  display: flex;
  align-items: center;
  justify-content: space-between;
  width: 246px;
`;
